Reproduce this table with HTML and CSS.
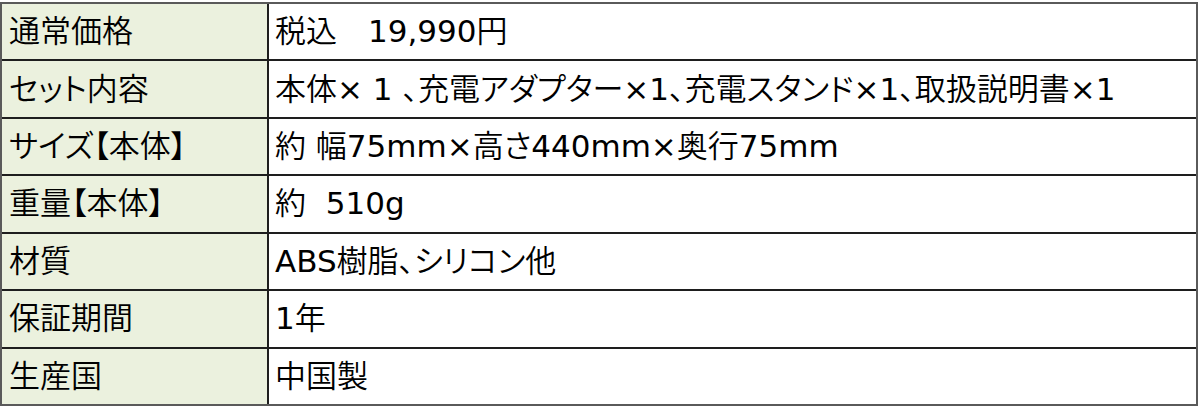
FILE: index.html
```html
<!DOCTYPE html>
<html lang="ja">
<head>
<meta charset="utf-8">
<link rel="stylesheet" href="styles.css">
</head>
<body>
<div class="spec">
  <div class="th">通常価格</div><div class="td">税込　19,990円</div>
  <div class="th">セット内容</div><div class="td">本体× 1 、充電アダプター×1、充電スタンド×1、取扱説明書×1</div>
  <div class="th">サイズ【本体】</div><div class="td">約 幅75mm×高さ440mm×奥行75mm</div>
  <div class="th">重量【本体】</div><div class="td">約&nbsp; 510g</div>
  <div class="th">材質</div><div class="td">ABS樹脂、シリコン他</div>
  <div class="th">保証期間</div><div class="td">1年</div>
  <div class="th">生産国</div><div class="td">中国製</div>
</div>
</body>
</html>
```
FILE: styles.css
```css
html, body {
  margin: 0;
  padding: 0;
  background: #ffffff;
}
body {
  font-family: "DejaVu Sans", "Noto Sans CJK JP DemiLight", "Noto Sans CJK JP", sans-serif;
  color: #000;
}
.spec {
  margin-top: 2px;
  width: 1198px;
  height: 404px;
  box-sizing: border-box;
  border: 2px solid #5a5a5a;
  background: #1e1e1e;
  display: grid;
  grid-template-columns: 265px 1fr;
  grid-template-rows: repeat(7, 1fr);
  gap: 2px;
}
.th, .td {
  display: flex;
  align-items: center;
  font-size: 31px;
  font-weight: 400;
  font-feature-settings: "palt";
  line-height: 1;
  white-space: nowrap;
}
.th {
  background: #ebf1de;
  padding-left: 7px;
}
.td {
  background: #ffffff;
  padding-left: 6px;
}
```
